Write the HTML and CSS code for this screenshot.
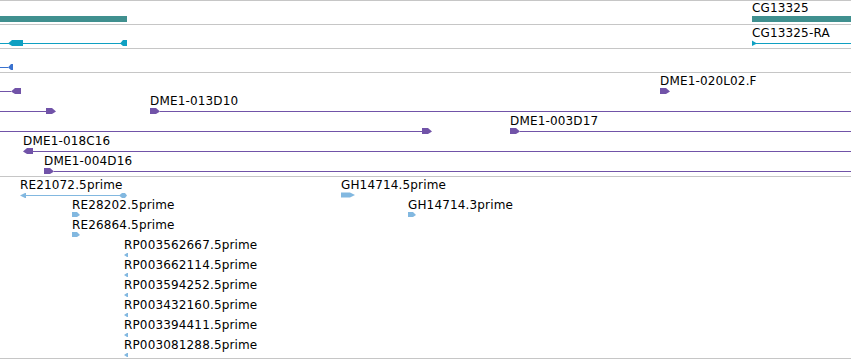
FILE: index.html
```html
<!DOCTYPE html>
<html lang="en">
<head>
    <meta charset="UTF-8">
    <meta name="viewport" content="width=device-width, initial-scale=1.0">
    <title>Tracks</title>
    <link rel="stylesheet" href="styles.css">
</head>
<body>
    <div class="view">

        <!-- genes -->
        <div class="track">
            <div class="lane">
                <div class="feat gene bare" style="left:0;width:127px">
                    <svg class="glyph" width="127" height="6"><rect x="0" y="0" width="127" height="6"/></svg>
                </div>
                <div class="feat gene" style="left:752px;width:99px">
                    <span class="name">CG13325</span>
                    <svg class="glyph" width="99" height="6"><rect x="0" y="0" width="99" height="6"/></svg>
                </div>
            </div>
        </div>

        <!-- transcripts -->
        <div class="track">
            <div class="lane">
                <div class="feat mrna bare" style="left:0;width:127px">
                    <svg class="glyph" width="127" height="6">
                        <rect x="0" y="3" width="127" height="1"/>
                        <polygon points="8,3.5 12,0 23,0 23,6 12,6"/>
                        <polygon points="120,3.5 123,0 127,0 127,6 123,6"/>
                    </svg>
                </div>
                <div class="feat mrna" style="left:752px;width:99px">
                    <span class="name">CG13325-RA</span>
                    <svg class="glyph" width="99" height="6">
                        <rect x="0" y="3" width="99" height="1"/>
                        <polygon points="0,0.5 5,3.5 0,6"/>
                    </svg>
                </div>
            </div>
        </div>

        <!-- cds -->
        <div class="track">
            <div class="lane">
                <div class="feat cds bare" style="left:0;width:13px">
                    <svg class="glyph" width="13" height="6">
                        <rect x="0" y="3" width="8" height="1"/>
                        <polygon points="8,3.5 11,0 13,0 13,6 11,6"/>
                    </svg>
                </div>
            </div>
        </div>

        <!-- clone ends -->
        <div class="track">
            <div class="lane">
                <div class="feat clone bare" style="left:0;width:21px">
                    <svg class="glyph" width="21" height="6">
                        <rect x="0" y="3" width="11" height="1"/>
                        <polygon points="11,3.5 15,0 21,0 21,6 15,6"/>
                    </svg>
                </div>
                <div class="feat clone" style="left:660px;width:10px">
                    <span class="name">DME1-020L02.F</span>
                    <svg class="glyph" width="10" height="6"><polygon points="0,0 6,0 10,3.5 6,6 0,6"/></svg>
                </div>
            </div>
            <div class="lane">
                <div class="feat clone bare" style="left:0;width:56px">
                    <svg class="glyph" width="56" height="6">
                        <rect x="0" y="3" width="46" height="1"/>
                        <polygon points="46,0 52,0 56,3.5 52,6 46,6"/>
                    </svg>
                </div>
                <div class="feat clone" style="left:150px;width:701px">
                    <span class="name">DME1-013D10</span>
                    <svg class="glyph" width="701" height="6">
                        <polygon points="0,0 6,0 10,3.5 6,6 0,6"/>
                        <rect x="10" y="3" width="691" height="1"/>
                    </svg>
                </div>
            </div>
            <div class="lane">
                <div class="feat clone bare" style="left:0;width:432px">
                    <svg class="glyph" width="432" height="6">
                        <rect x="0" y="3" width="422" height="1"/>
                        <polygon points="422,0 428,0 432,3.5 428,6 422,6"/>
                    </svg>
                </div>
                <div class="feat clone" style="left:510px;width:341px">
                    <span class="name">DME1-003D17</span>
                    <svg class="glyph" width="341" height="6">
                        <polygon points="0,0 6,0 10,3.5 6,6 0,6"/>
                        <rect x="10" y="3" width="331" height="1"/>
                    </svg>
                </div>
            </div>
            <div class="lane">
                <div class="feat clone" style="left:23px;width:828px">
                    <span class="name">DME1-018C16</span>
                    <svg class="glyph" width="828" height="6">
                        <polygon points="0,3.5 4,0 10,0 10,6 4,6"/>
                        <rect x="10" y="3" width="818" height="1"/>
                    </svg>
                </div>
            </div>
            <div class="lane">
                <div class="feat clone" style="left:44px;width:807px">
                    <span class="name">DME1-004D16</span>
                    <svg class="glyph" width="807" height="6">
                        <polygon points="0,0 6,0 10,3.5 6,6 0,6"/>
                        <rect x="10" y="3" width="797" height="1"/>
                    </svg>
                </div>
            </div>
        </div>

        <!-- ESTs -->
        <div class="track tight">
            <div class="lane">
                <div class="feat est" style="left:20px;width:107px">
                    <span class="name">RE21072.5prime</span>
                    <svg class="glyph" width="107" height="6">
                        <polygon points="0,3.5 5,1 6,1 6,6 5,6"/>
                        <rect x="6" y="3" width="94" height="1"/>
                        <polygon points="99,3.5 102,1 105,1 107,3.5 105,6 102,6"/>
                    </svg>
                </div>
                <div class="feat est" style="left:341px;width:14px">
                    <span class="name">GH14714.5prime</span>
                    <svg class="glyph" width="14" height="6"><polygon points="0,0.5 9,0.5 14,3 9,5.5 0,5.5"/></svg>
                </div>
            </div>
            <div class="lane">
                <div class="feat est" style="left:72px;width:8px">
                    <span class="name">RE28202.5prime</span>
                    <svg class="glyph" width="8" height="6"><polygon points="0,0 5,0 8,3 5,5 0,5"/></svg>
                </div>
                <div class="feat est" style="left:408px;width:8px">
                    <span class="name">GH14714.3prime</span>
                    <svg class="glyph" width="8" height="6"><polygon points="0,0 5,0 8,3 5,5 0,5"/></svg>
                </div>
            </div>
            <div class="lane">
                <div class="feat est" style="left:72px;width:8px">
                    <span class="name">RE26864.5prime</span>
                    <svg class="glyph" width="8" height="6"><polygon points="0,0 5,0 8,3 5,5 0,5"/></svg>
                </div>
            </div>
            <div class="lane">
                <div class="feat est" style="left:124px;width:4px">
                    <span class="name">RP003562667.5prime</span>
                    <svg class="glyph" width="4" height="6"><polygon points="0,3 3,1 4,1 4,5 3,5"/></svg>
                </div>
            </div>
            <div class="lane">
                <div class="feat est" style="left:124px;width:4px">
                    <span class="name">RP003662114.5prime</span>
                    <svg class="glyph" width="4" height="6"><polygon points="0,3 3,1 4,1 4,5 3,5"/></svg>
                </div>
            </div>
            <div class="lane">
                <div class="feat est" style="left:124px;width:4px">
                    <span class="name">RP003594252.5prime</span>
                    <svg class="glyph" width="4" height="6"><polygon points="0,3 3,1 4,1 4,5 3,5"/></svg>
                </div>
            </div>
            <div class="lane">
                <div class="feat est" style="left:124px;width:4px">
                    <span class="name">RP003432160.5prime</span>
                    <svg class="glyph" width="4" height="6"><polygon points="0,3 3,1 4,1 4,5 3,5"/></svg>
                </div>
            </div>
            <div class="lane">
                <div class="feat est" style="left:124px;width:4px">
                    <span class="name">RP003394411.5prime</span>
                    <svg class="glyph" width="4" height="6"><polygon points="0,3 3,1 4,1 4,5 3,5"/></svg>
                </div>
            </div>
            <div class="lane">
                <div class="feat est" style="left:124px;width:4px">
                    <span class="name">RP003081288.5prime</span>
                    <svg class="glyph" width="4" height="6"><polygon points="0,3 3,1 4,1 4,5 3,5"/></svg>
                </div>
            </div>
        </div>

    </div>
</body>
</html>
```

FILE: styles.css
```css
body {
    margin: 0;
    background-color: white;
    font-family: "DejaVu Sans", sans-serif;
    font-size: 12px;
    color: black;
}

.view {
    width: 851px;
    height: 360px;
    overflow: hidden;
    border-top: 1px solid #c6c6c6;
    box-sizing: border-box;
}

.track {
    padding: 1px 0 2px;
    border-bottom: 1px solid #c6c6c6;
}

.track.tight {
    padding-bottom: 0;
}

.lane {
    position: relative;
    height: 20px;
}

.feat {
    position: absolute;
    top: 0;
}

.feat.bare {
    padding-top: 14px;
}

.name {
    display: block;
    height: 14px;
    line-height: 14px;
    white-space: nowrap;
    letter-spacing: 0.15px;
}

.gene .name {
    margin: -1px 0 1px;
}

.glyph {
    display: block;
    overflow: visible;
    fill: currentColor;
}

.glyph rect {
    shape-rendering: crispEdges;
}

.gene .glyph { color: #40908f; }
.mrna .glyph { color: #0fa0c2; }
.cds .glyph { color: #3a72cf; }
.clone .glyph { color: #7153a8; }
.est .glyph { color: #82b8e0; }
```
